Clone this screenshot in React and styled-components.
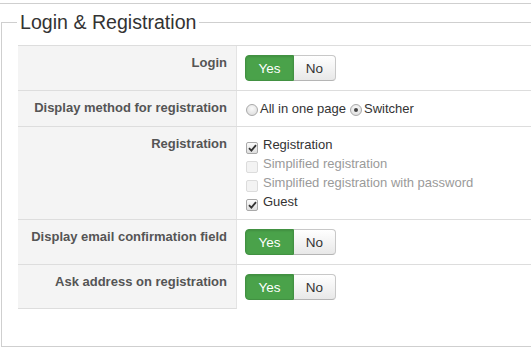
import React from "react";
import styled, { createGlobalStyle } from "styled-components";

const Global = createGlobalStyle`
  html, body { margin: 0; padding: 0; background: #fff; }
  body { overflow: hidden; font-family: "Liberation Sans", Arial, sans-serif; }
  #root { width: 531px; height: 347px; overflow: hidden; }
`;

const Page = styled.div`
  width: 531px;
  height: 347px;
  overflow: hidden;
`;

const PrevSection = styled.div`
  height: 3px;
  border-bottom: 1px solid #cfcfcf;
`;

const Fieldset = styled.fieldset`
  margin: 6px 0 0 1px;
  width: 580px;
  box-sizing: border-box;
  border: 1px solid #cfcfcf;
  padding: 10px 0 37px 16px;
`;

const Legend = styled.legend`
  margin-left: -1px;
  padding: 0 3px;
  font-size: 19.6px;
  line-height: 25px;
  color: #333;
  font-weight: normal;
`;

const Table = styled.div`
  display: flex;
  flex-direction: column;
`;

const Row = styled.div`
  display: grid;
  grid-template-columns: 219px 1fr;
  border-top: 1px solid #dddddd;
`;

const Label = styled.div`
  box-sizing: border-box;
  background: #f4f4f4;
  border-right: 1px solid #e4e4e4;
  border-bottom: ${(p) => (p.$last ? "1px solid #dddddd" : "none")};
  padding: 8px 9px 8px 8px;
  text-align: right;
  font-size: 13px;
  line-height: 18px;
  font-weight: bold;
  color: #555;
`;

const Value = styled.div`
  padding: 8px 8px 8px 8px;
  font-size: 13px;
  line-height: 19px;
  color: #333;
`;

const BtnGroup = styled.div`
  display: inline-flex;
  margin: 1px 0;
  height: 26px;
`;

const Btn = styled.span`
  display: inline-flex;
  align-items: center;
  justify-content: center;
  box-sizing: border-box;
  height: 26px;
  width: ${(p) => p.$w}px;
  font-size: 13.5px;
  border: 1px solid;
  ${(p) =>
    p.$active
      ? `
    background: #4aa24a;
    border-color: #429142;
    color: #fff;
    border-radius: 4px 0 0 4px;
    box-shadow: inset 0 1px 2px rgba(0,0,0,0.12);
  `
      : `
    background: linear-gradient(#ffffff, #e8e8e8);
    border-color: #c8c8c8 #c8c8c8 #b5b5b5 #c8c8c8;
    border-left: none;
    color: #333;
    border-radius: 0 4px 4px 0;
  `}
`;

const RadioLine = styled.div`
  display: flex;
  align-items: flex-start;
`;

const RadioItem = styled.label`
  display: inline-flex;
  align-items: flex-start;
  margin-left: ${(p) => (p.$first ? "1px" : "4px")};
`;

const RadioCircle = styled.span`
  box-sizing: border-box;
  width: 12px;
  height: 12px;
  margin-top: 5px;
  margin-right: 2px;
  border-radius: 50%;
  border: 1px solid #a9a9a9;
  background: radial-gradient(circle at 50% 35%, #fafafa, #d9d9d9);
  display: flex;
  align-items: center;
  justify-content: center;
  &::after {
    content: "";
    width: 4px;
    height: 4px;
    border-radius: 50%;
    background: ${(p) => (p.$checked ? "#444" : "transparent")};
  }
`;

const CheckList = styled.div`
  display: flex;
  flex-direction: column;
`;

const CheckItem = styled.label`
  display: flex;
  align-items: flex-start;
  color: ${(p) => (p.$disabled ? "#9a9a9a" : "#333")};
`;

const Box = styled.span`
  box-sizing: border-box;
  width: 12px;
  height: 12px;
  margin: 7px 5px 0 1px;
  border: 1px solid ${(p) => (p.$disabled ? "#dcdcdc" : "#a9a9a9")};
  border-radius: 2px;
  background: ${(p) =>
    p.$disabled ? "#f3f3f3" : "linear-gradient(#fbfbfb, #dedede)"};
  display: flex;
  align-items: center;
  justify-content: center;
`;

const Check = () => (
  <svg width="9" height="8" viewBox="0 0 9 8">
    <path d="M1 4.2 L3.4 6.6 L8 1.2" fill="none" stroke="#333" strokeWidth="1.8" />
  </svg>
);

const YesNo = () => (
  <BtnGroup>
    <Btn $active $w={49}>Yes</Btn>
    <Btn $w={42}>No</Btn>
  </BtnGroup>
);

const checks = [
  { text: "Registration", checked: true },
  { text: "Simplified registration", disabled: true },
  { text: "Simplified registration with password", disabled: true },
  { text: "Guest", checked: true },
];

export default function App() {
  return (
    <Page>
      <Global />
      <PrevSection />
      <Fieldset>
        <Legend>Login &amp; Registration</Legend>
        <Table>
          <Row>
            <Label>Login</Label>
            <Value>
              <YesNo />
            </Value>
          </Row>
          <Row>
            <Label>Display method for registration</Label>
            <Value>
              <RadioLine>
                <RadioItem $first>
                  <RadioCircle />
                  All in one page
                </RadioItem>
                <RadioItem>
                  <RadioCircle $checked />
                  Switcher
                </RadioItem>
              </RadioLine>
            </Value>
          </Row>
          <Row>
            <Label>Registration</Label>
            <Value>
              <CheckList>
                {checks.map((c) => (
                  <CheckItem key={c.text} $disabled={c.disabled}>
                    <Box $disabled={c.disabled}>{c.checked && <Check />}</Box>
                    {c.text}
                  </CheckItem>
                ))}
              </CheckList>
            </Value>
          </Row>
          <Row>
            <Label>Display email confirmation field</Label>
            <Value>
              <YesNo />
            </Value>
          </Row>
          <Row>
            <Label $last>Ask address on registration</Label>
            <Value>
              <YesNo />
            </Value>
          </Row>
        </Table>
      </Fieldset>
    </Page>
  );
}
